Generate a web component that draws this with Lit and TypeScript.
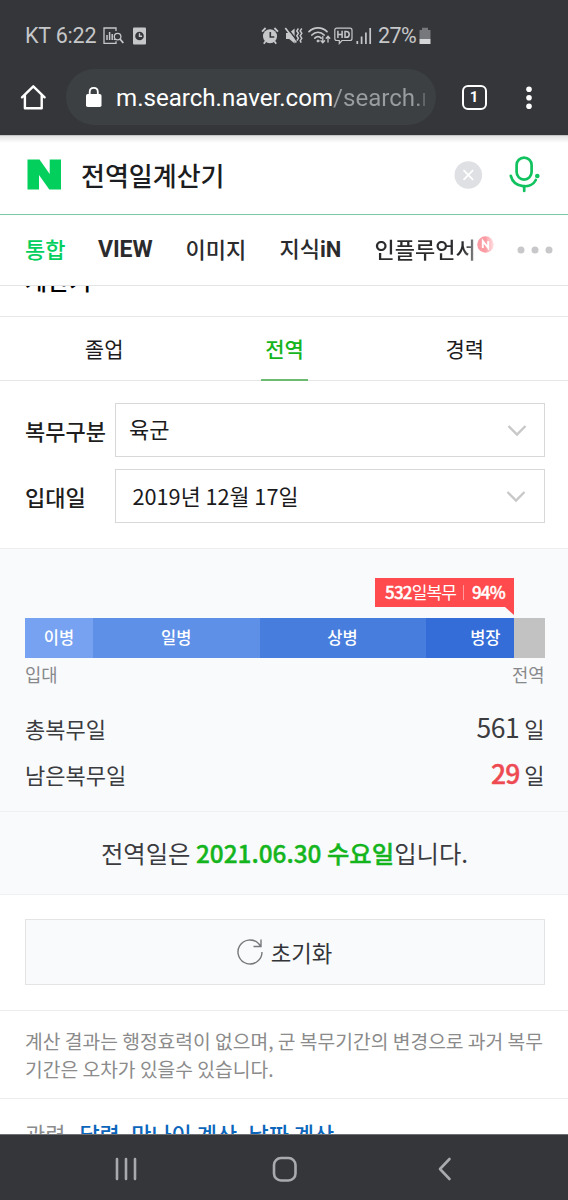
import { LitElement, html, css, svg } from "lit";
import { customElement } from "lit/decorators.js";

const shared = css`
  :host { display: block; font-family: "Noto Sans CJK KR", "Noto Sans", sans-serif; }
  * { box-sizing: border-box; }
  svg { display: block; flex: none; overflow: visible; }
`;

@customElement("status-bar")
class StatusBar extends LitElement {
  static styles = [shared, css`
    .bar { height: 68px; padding: 3px 0 0 25px; display: flex; align-items: center; color: #c6c7c9; font: 400 21.5px/24px Roboto, sans-serif; }
    .clock { width: 78px; white-space: nowrap; letter-spacing: -0.2px; padding-top: 1px; }
    .left { display: flex; gap: 9px; width: 158px; align-items: center; }
    .right { display: flex; align-items: center; }
    .pct { width: 40.5px; padding-top: 1px; letter-spacing: -0.6px; }
  `];
  render() {
    return html`<div class="bar">
      <div class="clock">KT 6:22</div>
      <div class="left">
        <svg width="21" height="18" viewBox="0 0 21 18" fill="none" stroke="#c6c7c9" stroke-width="1.3"><path d="M13 4V1H1v15.3h12v-2"/><path d="M4 13V8M6.6 13V5M9.2 13V7M11.5 13v-1" stroke-width="1.5"/><circle cx="14.6" cy="9.6" r="3.3"/><path d="M17 12l3.3 4" stroke-width="1.8"/></svg>
        <svg width="13" height="18" viewBox="0 0 13 18"><rect y=".5" width="13" height="17" rx="1" fill="#c6c7c9"/><circle cx="6.5" cy="9" r="4.3" fill="#35363a"/><path d="M6.5 6.2V9.2h2.6" fill="none" stroke="#c6c7c9" stroke-width="1.4"/></svg>
      </div>
      <div class="right">
        <svg width="24" height="18" viewBox="0 0 24 18"><circle cx="9" cy="9.3" r="7" fill="#c6c7c9"/><path d="M1 4.6 4.6 1M17 4.6 13.4 1M4.6 14.3 2.8 16.7M13.4 14.3l1.8 2.4" stroke="#c6c7c9" stroke-width="1.8"/><path d="M9.3 5v5h4" fill="none" stroke="#35363a" stroke-width="1.6"/></svg>
        <svg width="23" height="18" viewBox="0 0 23 18"><path d="M1 6h3.2L9.6 1.400v15L4.200 12H1z" fill="#c6c7c9"/><path d="M1.500 0l10.500 13.500" stroke="#35363a" stroke-width="1.500"/><path d="M0.300 1l11 14.500" stroke="#c6c7c9" stroke-width="1.700"/><path d="M13.400 1.500l-1.600 2.400 1.600 2.400-1.600 2.500 1.600 2.500-1.600 2.400M16.800 1.500l-1.600 2.400 1.600 2.400-1.600 2.500 1.600 2.500-1.600 2.400 1 2" fill="none" stroke="#c6c7c9" stroke-width="1.500"/></svg>
        <svg width="26" height="18" viewBox="0 0 26 18" fill="none" stroke="#c6c7c9" stroke-width="1.7" stroke-linecap="round"><path d="M1 4.700C5.800-.500 14.200-.500 19 4.700M3.900 8c3.400-3.700 8.800-3.700 12.200 0M6.800 11.200c1.900-2 4.500-2 6.400 0"/><circle cx="10" cy="14" r="1" fill="#c6c7c9" stroke-width="1"/><path d="M14.800 9.500v6M13 13.800l1.800 2 1.800-2M20 15v-5.500M18.200 11.200l1.800-2 1.800 2" stroke-width="1.300"/></svg>
        <svg width="22" height="18" viewBox="0 0 22 18" fill="none" stroke="#c6c7c9"><path d="M2.800 1.200h13.200q2 0 2 2v8.300q0 2-2 2H8l-2.700 3v-3H2.800q-2 0-2-2V3.200q0-2 2-2z" stroke-width="1.200"/><path d="M3.900 3.800v7.200M8.100 3.800v7.200M3.900 7.400h4.200M11 4.500v5.800h1.300q2.900 0 2.900-2.900t-2.900-2.900z" stroke-width="1.500"/></svg>
        <svg width="22" height="18" viewBox="0 0 22 18" stroke="#c6c7c9" stroke-width="1.700"><path d="M1.300 17v-3M5.600 17V9.500M9.900 17V5.500M14.200 17V1"/></svg>
        <div class="pct">27%</div>
        <svg width="12" height="18" viewBox="0 0 12 18"><path d="M3 .8h6V3h2.500v9H.5V3H3z" fill="#77787b"/><path d="M.5 12h11v5H.5z" fill="#d5d6d7"/></svg>
      </div>
    </div>`;
  }
}

@customElement("browser-bar")
class BrowserBar extends LitElement {
  static styles = [shared, css`
    .bar { height: 67px; display: flex; align-items: flex-start; font-family: Roboto, sans-serif; padding-top: 0.5px; }
    .home { padding: 15px 0 0 20px; width: 66px; }
    .pill { width: 369.500px; height: 56px; border-radius: 28px; background: #3c4043; display: flex; align-items: center; padding-left: 20px; }
    .url { margin-left: 14px; width: 309px; overflow: hidden; white-space: nowrap; color: #fff; font-size: 24.1px; line-height: 34px; padding-top: 3px; }
    .path { background: linear-gradient(90deg, #9a9da0 82%, #505457 92%); -webkit-background-clip: text; color: transparent; }
    .count { margin: 16px 0 0 26px; width: 25px; height: 25px; border: 2.4px solid #fff; border-radius: 6px; color: #fff; font-size: 15px; font-weight: 700; line-height: 20px; text-align: center; }
    .more { padding: 17px 0 0 39.500px; }
  `];
  render() {
    return html`<div class="bar">
      <div class="home"><svg width="26" height="26" viewBox="0 0 26 26" fill="none" stroke="#fff" stroke-width="2.400" stroke-linejoin="round" stroke-linecap="round"><path d="M2 13.300 13.300 2.300 24.600 13.300M4.900 11v13.200h16.800V11"/></svg></div>
      <div class="pill">
        <svg width="16" height="20" viewBox="0 0 16 20"><rect y="7" width="15.500" height="13" rx="1.800" fill="#fff"/><path d="M3.700 8V5q0-4.100 4.050-4.100T11.800 5v3" fill="none" stroke="#fff" stroke-width="1.800"/></svg>
        <div class="url">m.search.naver.com<span class="path">/search.n</span></div>
      </div>
      <div class="count">1</div>
      <div class="more"><svg width="6" height="24" viewBox="0 0 6 24" fill="#fff"><circle cx="3" cy="3.200" r="2.800"/><circle cx="3" cy="11.700" r="2.800"/><circle cx="3" cy="20.200" r="2.800"/></svg></div>
    </div>`;
  }
}

@customElement("search-header")
class SearchHeader extends LitElement {
  static styles = [shared, css`
    .head { height: 80px; border-bottom: 1.500px solid #76cba5; display: flex; align-items: center; padding-left: 27px; background: linear-gradient(#a8a8aa 0, #e4e4e5 1px, #fff 8px); }
    .word { width: 393px; padding-left: 19px; font-weight: 500; font-size: 26px; line-height: 38px; color: #1c1d20; }
    .mic { margin-left: 26px; }
    .nav { height: 71px; border-bottom: 1px solid #e4e4e4; display: flex; align-items: center; padding: 0 15px 0 25px; font-weight: 500; font-size: 22px; line-height: 32px; color: #2b2b2d; white-space: nowrap; }
    .nav span { flex: none; margin-top: -4px; }
    .nav .on { width: 73px; color: #03cf5d; }
    .nav .view { width: 87.500px; font-family: Roboto, sans-serif; font-weight: 700; font-size: 23px; letter-spacing: -0.1px; margin-top: 0; }
    .img { width: 94px; }
    .kin { width: 95px; }
    .kin b { font-family: Roboto, sans-serif; font-weight: 700; }
    .inf { width: 102.500px; background: linear-gradient(90deg, #2b2b2d 86%, #8a8a8c 98%); -webkit-background-clip: text; color: transparent; }
    .new { width: 40px; padding-bottom: 8px; }
  `];
  render() {
    return html`<div class="head">
        <svg width="35" height="31" viewBox="0 0 35 31"><path d="M.5.500h12L22.700 15V.500H34v30H22.300L12 16v14.500H.500z" fill="#03cf5d"/></svg>
        <div class="word">전역일계산기</div>
        <svg width="28" height="28" viewBox="0 0 28 28"><circle cx="13.300" cy="14" r="13.800" fill="#dfe0e3"/><path d="M8.500 9.200l9.600 9.600M18.100 9.200l-9.600 9.600" stroke="#fff" stroke-width="1.700"/></svg>
        <svg class="mic" width="32" height="38" viewBox="0 0 32 38" fill="none" stroke="#12c25f" stroke-width="2.700" stroke-linecap="round"><rect x="7.600" y="1.600" width="15" height="22" rx="7.500"/><path d="M1.800 19.800C5 32.300 22.500 33.300 26.800 24M15.200 30v5"/><circle cx="28.300" cy="20" r="2.300" fill="#12c25f" stroke="none"/></svg>
      </div>
      <div class="nav">
        <span class="on">통합</span><span class="view">VIEW</span><span class="img">이미지</span><span class="kin">지식<b>iN</b></span><span class="inf">인플루언서</span>
        <span class="new"><svg width="17" height="17" viewBox="0 0 17 17"><defs><linearGradient id="g"><stop offset=".5" stop-color="#fb9ca5"/><stop offset="1" stop-color="#ffe3e5"/></linearGradient></defs><circle cx="8.500" cy="8.500" r="8.300" fill="url(#g)"/><path d="M5.800 12V5l5.400 7V5" fill="none" stroke="#fff" stroke-width="1.900"/></svg></span>
        <svg width="36" height="8" viewBox="0 0 36 8" fill="#c8c8ca"><circle cx="4" cy="4" r="3.500"/><circle cx="18" cy="4" r="3.500"/><circle cx="32" cy="4" r="3.500"/></svg>
      </div>`;
  }
}

const STAGES = [
  { name: "이병", w: 68, c: "#77a2f1" },
  { name: "일병", w: 166.5, c: "#5f90e8" },
  { name: "상병", w: 166, c: "#477edd" },
];

@customElement("service-calculator")
class ServiceCalculator extends LitElement {
  static styles = [shared, css`
    .peek { height: 31px; overflow: hidden; border-bottom: 1px solid #e8e8e8; padding-left: 25px; display: flex; align-items: flex-start; }
    .peek div { margin-top: -24px; font-size: 24px; font-weight: 500; line-height: 36px; color: #000; }
    .tabs { height: 64px; border-bottom: 1px solid #e6e6e6; padding: 0 13px 0 14px; display: grid; grid-template-columns: repeat(3, 1fr); justify-items: center; font-size: 21px; line-height: 62px; color: #1c1c1e; }
    .tabs div { height: 64px; padding: 0 4px; }
    .tabs .sel { color: #14b51c; font-weight: 500; border-bottom: 2px solid #6dbb73; }
    .form { height: 168px; border-bottom: 1px solid #eceef0; padding: 22px 23.500px 0 25px; display: flex; flex-direction: column; gap: 12px; }
    .row { display: flex; height: 54px; align-items: center; }
    .label { width: 89.500px; font-size: 22px; line-height: 32px; font-weight: 500; color: #1e1e20; white-space: nowrap; }
    .select { flex: 1; height: 54px; border: 1px solid #d8d8d8; font-size: 22px; line-height: 32px; color: #1a1a1c; display: flex; align-items: center; justify-content: space-between; padding: 0 17px 0 13.500px; }
    .select span { margin-top: -4px; }
    .select.date { padding: 0 18px 0 17px; font-size: 21.700px; }
    .date span { margin-top: -1px; }
    .stats { height: 263px; background: #f9fafc; border-bottom: 1px solid #eff1f3; padding: 29px 23.500px 0 25px; }
    .tipline { padding-left: 350px; height: 40px; }
    .tip { width: 138.500px; height: 29px; background: #ff4b4d; color: #fff; font-size: 17px; line-height: 28px; display: flex; align-items: center; padding: 0 0 1px 10px; white-space: nowrap; letter-spacing: -0.900px; }
    .tip b, .result b, .red { font-weight: 500; -webkit-text-stroke: 0.4px currentColor; }
    .tip b { letter-spacing: -0.800px; }
    .sep { width: 1px; height: 15px; background: #ff9b9c; margin: 0 7.500px; }
    .tail { margin-left: 129.500px; }
    .gauge { height: 40px; display: flex; background: #c2c2c2; color: #fff; font-size: 16.500px; font-weight: 500; line-height: 38px; text-align: center; }
    .last { width: 88px; background: #346dd8; text-align: right; padding-right: 13px; }
    .ends { display: flex; justify-content: space-between; color: #87888a; font-size: 17.700px; line-height: 26px; padding-top: 3px; }
    .stat { display: flex; justify-content: space-between; align-items: baseline; font-size: 22px; line-height: 46px; height: 46px; color: #3b3c40; }
    .first { margin-top: 17px; }
    .stat .num { font-size: 26.500px; letter-spacing: -0.400px; }
    .stat .red { color: #ee4a52; letter-spacing: -1px; }
    .result { height: 83px; background: #f9fafc; border-bottom: 1px solid #eff1f3; text-align: center; font-size: 24.350px; line-height: 82px; color: #3b3c40; white-space: nowrap; padding-left: 1px; }
    .result b { color: #14b51c; }
    .action { height: 116px; padding: 24px 23.500px 0 24.500px; border-bottom: 1px solid #ececec; }
    .reset { height: 66px; border: 1px solid #e3e4e6; background: #f9fafc; display: flex; justify-content: center; align-items: center; gap: 8px; font-size: 22.300px; line-height: 32px; color: #333438; }
    .reset span { margin-top: -1px; }
    .notice { height: 88px; border-bottom: 1px solid #ececec; padding: 17px 0 0 25px; font-size: 19.250px; line-height: 27.500px; color: #8b8b8b; white-space: nowrap; }
    .related { height: 35px; overflow: hidden; padding: 17px 0 0 25px; display: flex; gap: 14px; font-size: 21.950px; line-height: 36px; color: #8b8b8b; white-space: nowrap; }
    .related .links { color: #0b66bb; font-weight: 500; }
  `];
  private arrow() {
    return svg`<svg width="20" height="13" viewBox="0 0 20 13" fill="none" stroke="#c8c8c8" stroke-width="2.400"><path d="M1.500 2 10 10.600 18.500 2"/></svg>`;
  }
  render() {
    return html`<div class="peek"><div>계산기</div></div>
      <div class="tabs"><div>졸업</div><div class="sel">전역</div><div>경력</div></div>
      <div class="form">
        <div class="row"><div class="label">복무구분</div><div class="select"><span>육군</span>${this.arrow()}</div></div>
        <div class="row"><div class="label">입대일</div><div class="select date"><span>2019년 12월 17일</span>${this.arrow()}</div></div>
      </div>
      <div class="stats">
        <div class="tipline">
          <div class="tip"><b>532</b><span>일복무</span><i class="sep"></i><b>94%</b></div>
          <svg class="tail" width="9" height="8" viewBox="0 0 9 8"><path d="M0 0h9v8z" fill="#ff4b4d"/></svg>
        </div>
        <div class="gauge">
          ${STAGES.map((s) => html`<div style="width:${s.w}px;background:${s.c}">${s.name}</div>`)}
          <div class="last">병장</div>
        </div>
        <div class="ends"><span>입대</span><span>전역</span></div>
        <div class="stat first"><span>총복무일</span><span><span class="num">561</span> 일</span></div>
        <div class="stat"><span>남은복무일</span><span><span class="num red">29</span> 일</span></div>
      </div>
      <div class="result">전역일은 <b>2021.06.30 수요일</b>입니다.</div>
      <div class="action"><div class="reset">
        <svg width="26" height="26" viewBox="0 0 26 26" fill="none" stroke="#77787b" stroke-width="1.400"><path d="M25 13A12 12 0 1 1 21.500 4.500L24 7.500M24 .500v7h-7.500"/></svg>
        <span>초기화</span></div></div>
      <div class="notice">계산 결과는 행정효력이 없으며, 군 복무기간의 변경으로 과거 복무<br>기간은 오차가 있을수 있습니다.</div>
      <div class="related"><span>관련</span><span class="links">달력, 만나이 계산, 날짜 계산</span></div>`;
  }
}

@customElement("system-nav")
class SystemNav extends LitElement {
  static styles = [shared, css`
    .nav { height: 67px; background: #35363a; border-top: 1px solid #707174; display: flex; align-items: center; padding: 1px 0 0 115px; }
    .home { margin-left: 134px; }
    .back { margin-left: 139px; }
  `];
  render() {
    return html`<div class="nav">
      <svg width="23" height="24" viewBox="0 0 23 24" stroke="#a9aaad" stroke-width="2.600" stroke-linecap="round"><path d="M2 2v20M11 2v20M20 2v20"/></svg>
      <svg class="home" width="26" height="26" viewBox="0 0 26 26"><rect x="2" y="2" width="21.500" height="22.500" rx="7" fill="none" stroke="#a9aaad" stroke-width="2.600"/></svg>
      <svg class="back" width="14" height="24" viewBox="0 0 14 24" fill="none" stroke="#a9aaad" stroke-width="2.600" stroke-linecap="round" stroke-linejoin="round"><path d="M12.500 2 3 12l9.500 10"/></svg>
    </div>`;
  }
}

@customElement("app-root")
class AppRoot extends LitElement {
  static styles = [shared, css`
    :host { width: 568px; height: 1200px; overflow: hidden; background: #fff; }
    .chrome { height: 135px; background: #35363a; }
  `];
  render() {
    return html`<div class="chrome"><status-bar></status-bar><browser-bar></browser-bar></div>
      <search-header></search-header>
      <service-calculator></service-calculator>
      <system-nav></system-nav>`;
  }
}
